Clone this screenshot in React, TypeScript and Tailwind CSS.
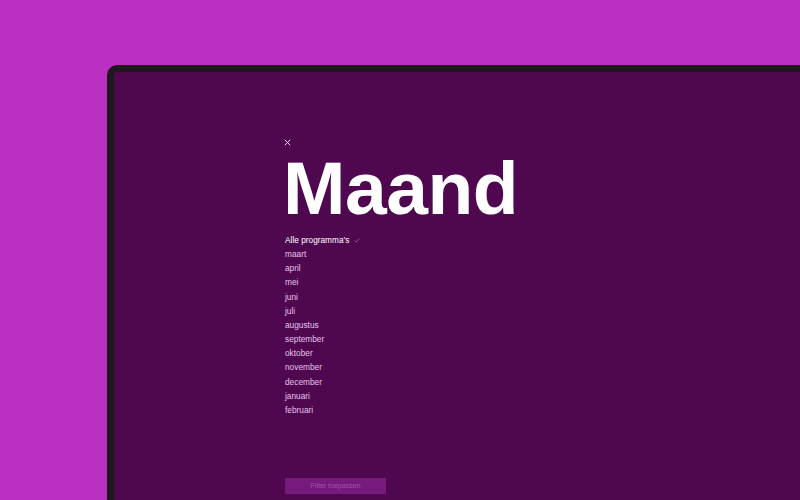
import React from "react";

const months = [
  "maart",
  "april",
  "mei",
  "juni",
  "juli",
  "augustus",
  "september",
  "oktober",
  "november",
  "december",
  "januari",
  "februari",
];

export default function App() {
  return (
    <div
      className="w-[800px] h-[500px] overflow-hidden bg-[#bb2fc0] flex flex-col"
      style={{ fontFamily: '"Liberation Sans", Arial, sans-serif' }}
    >
      <div className="ml-[107px] mt-[65px] flex-1 w-[720px] border-t-[7px] border-l-[7px] border-[#1c181c] rounded-tl-[10px] bg-[#4f0850] flex flex-col pl-[171px] pt-[65px]">
        <div className="h-[10px] flex items-center">
          <svg width="7" height="7" viewBox="0 0 7 7" className="ml-[-1px]">
            <path d="M0.8 0.8 L6.2 6.2 M6.2 0.8 L0.8 6.2" stroke="#f3dff5" strokeWidth="1" />
          </svg>
        </div>
        <h1 className="mt-[1px] text-white font-bold text-[75px] leading-[80px] tracking-[-0.5px] ml-[-2px]">
          Maand
        </h1>
        <ul className="mt-[5px] flex flex-col text-[8.3px] leading-[14.15px]">
          <li className="text-white flex items-center">
            Alle programma's
            <svg width="6" height="5" viewBox="0 0 6 5" className="ml-[5px]">
              <path d="M0.6 2.6 L2.2 4.1 L5.4 0.8" stroke="#9a5aa0" strokeWidth="0.9" fill="none" />
            </svg>
          </li>
          {months.map((m) => (
            <li key={m} className="text-[#e6c4ec]">
              {m}
            </li>
          ))}
        </ul>
        <div className="mt-auto mb-[6px]">
          <button className="w-[101px] h-[16px] bg-[#771a7d] text-[#a052a6] text-[7px] flex items-center justify-center">
            Filter toepassen
          </button>
        </div>
      </div>
    </div>
  );
}
